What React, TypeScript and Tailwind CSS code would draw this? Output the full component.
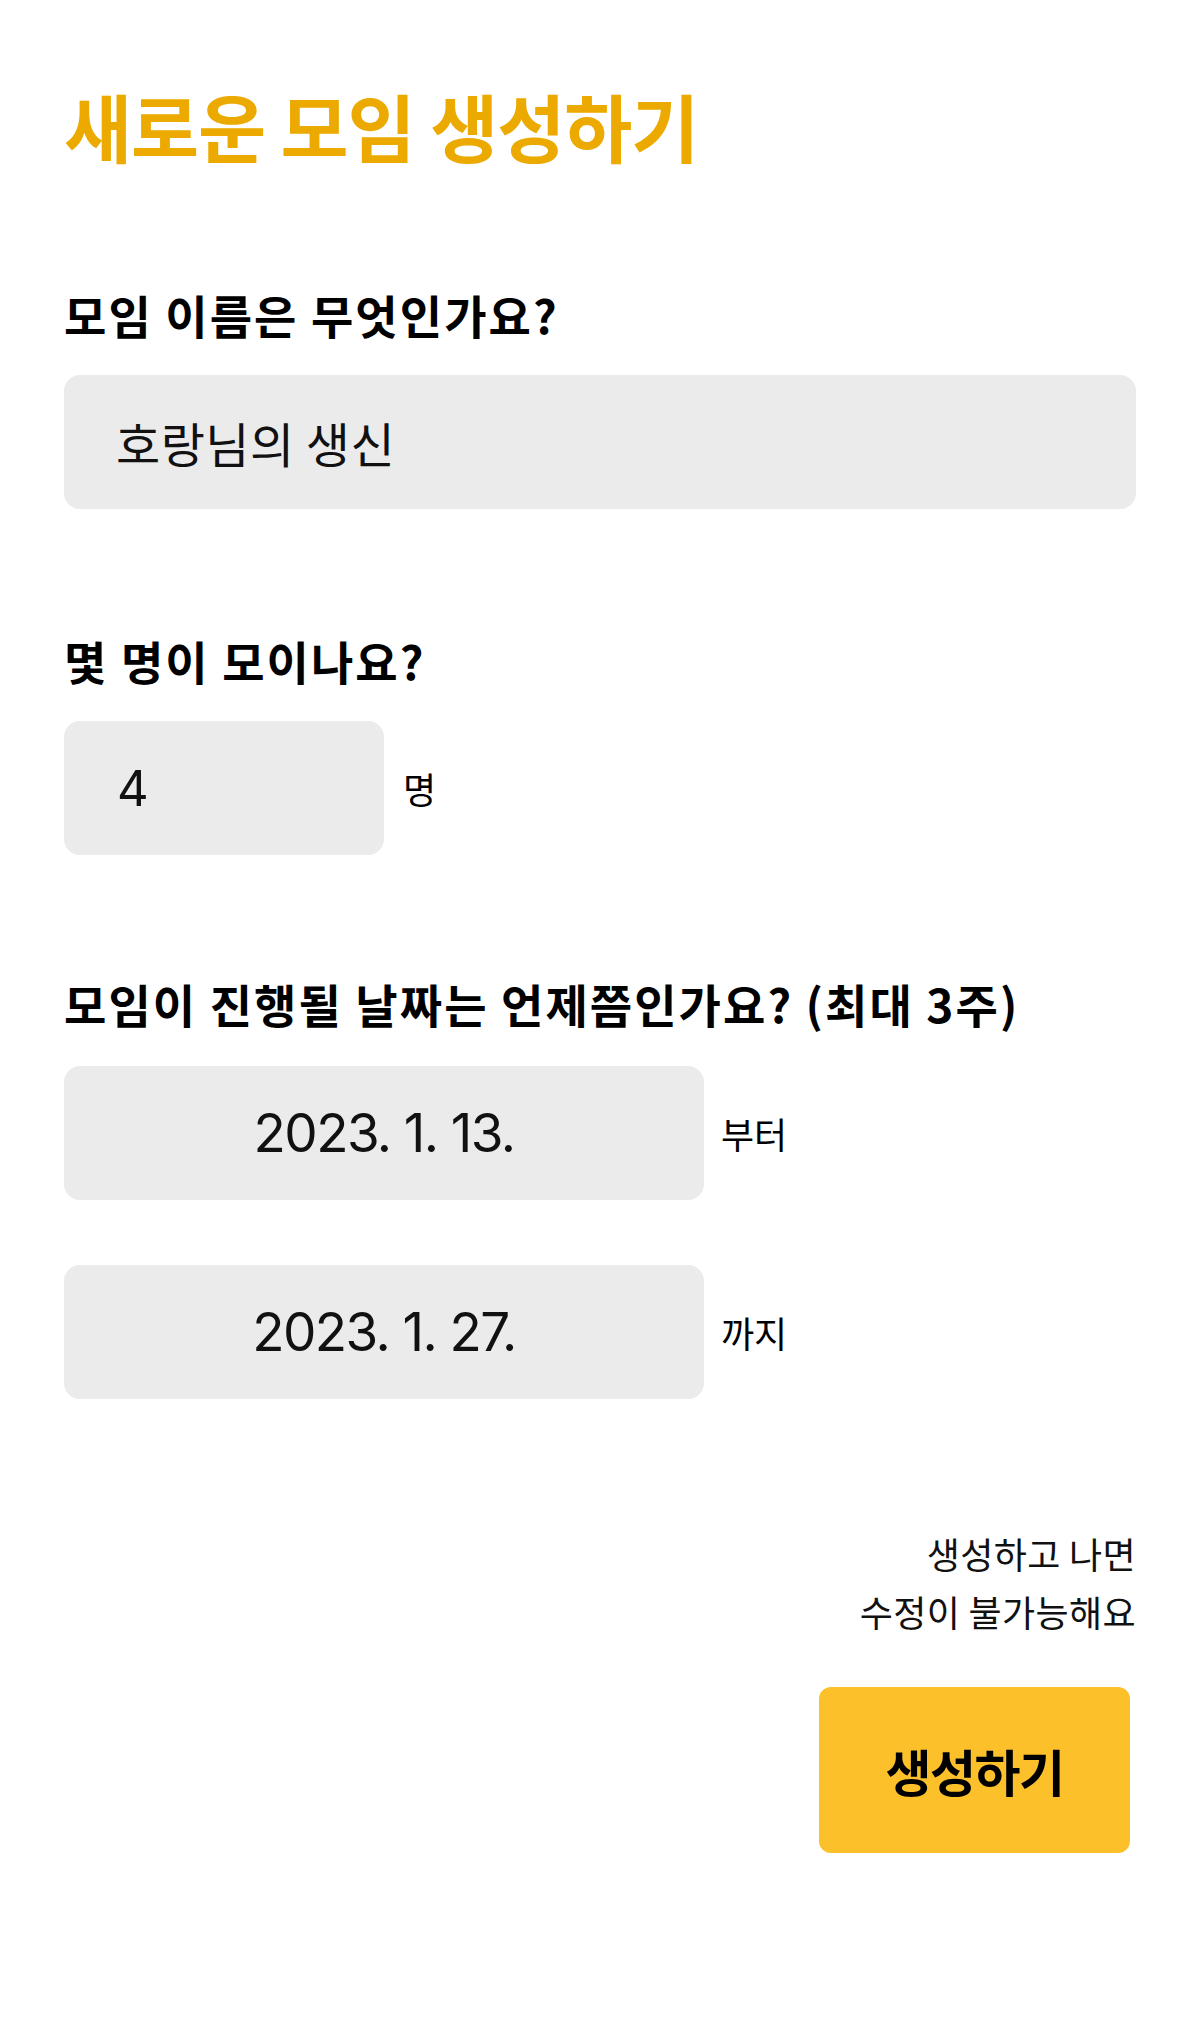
import React, { useState } from 'react';

const KR = 'font-["Noto_Sans_CJK_KR","Noto_Sans",sans-serif]';
const NUM = 'font-["Inter","Noto_Sans_CJK_KR",sans-serif]';

export default function App() {
  const [name, setName] = useState('호랑님의 생신');
  const [count, setCount] = useState('4');
  const [start, setStart] = useState('2023. 1. 13.');
  const [end, setEnd] = useState('2023. 1. 27.');

  return (
    <div className={`min-h-[2020px] w-full bg-white text-black ${KR}`}>
      <main className="flex flex-col px-[64px] pt-[88px]">
        {/* Title */}
        <h1 className="text-[74px] leading-none font-bold tracking-[-0.015em] text-[#ECAA00]">
          새로운 모임 생성하기
        </h1>

        {/* Meeting name */}
        <label className="mt-[129px] text-[46px] leading-none font-bold tracking-[0.045em]">
          모임 이름은 무엇인가요?
        </label>
        <input
          value={name}
          onChange={(e) => setName(e.target.value)}
          className={`mt-[38px] h-[134px] w-full rounded-[16px] bg-[#EBEBEB] pl-[52px] pr-6 text-[48px] tracking-[0.01em] text-[#111] outline-none ${KR}`}
        />

        {/* Member count */}
        <label className="mt-[128px] text-[46px] leading-none font-bold tracking-[0.045em]">
          몇 명이 모이나요?
        </label>
        <div className="mt-[38px] flex items-center gap-[19px]">
          <input
            value={count}
            onChange={(e) => setCount(e.target.value)}
            className={`h-[134px] w-[320px] rounded-[16px] bg-[#EBEBEB] pl-[53px] pr-4 text-[49px] text-[#111] outline-none ${NUM}`}
          />
          <span className="text-[36px]">명</span>
        </div>

        {/* Dates */}
        <label className="mt-[125px] text-[46px] leading-none font-bold tracking-[0.045em]">
          모임이 진행될 날짜는 언제쯤인가요? (최대 3주)
        </label>
        <div className="mt-[40px] flex items-center gap-[17px]">
          <input
            value={start}
            onChange={(e) => setStart(e.target.value)}
            className={`h-[134px] w-[640px] rounded-[16px] bg-[#EBEBEB] text-center text-[53px] tracking-[-0.03em] text-[#111] outline-none ${NUM}`}
          />
          <span className="text-[36px]">부터</span>
        </div>
        <div className="mt-[65px] flex items-center gap-[17px]">
          <input
            value={end}
            onChange={(e) => setEnd(e.target.value)}
            className={`h-[134px] w-[640px] rounded-[16px] bg-[#EBEBEB] text-center text-[53px] tracking-[-0.03em] text-[#111] outline-none ${NUM}`}
          />
          <span className="text-[36px]">까지</span>
        </div>

        {/* Notice + submit */}
        <div className="mt-[125px] flex flex-col items-end text-[36px] leading-[58px] tracking-[0.01em] text-[#111]">
          <p>생성하고 나면</p>
          <p>수정이 불가능해요</p>
        </div>
        <div className="mt-[47px] flex justify-end pr-[6px]">
          <button className="flex h-[166px] w-[311px] items-center justify-center rounded-[12px] bg-[#FCC12A] text-[50px] font-bold tracking-[-0.03em] text-black">
            생성하기
          </button>
        </div>
      </main>
    </div>
  );
}
